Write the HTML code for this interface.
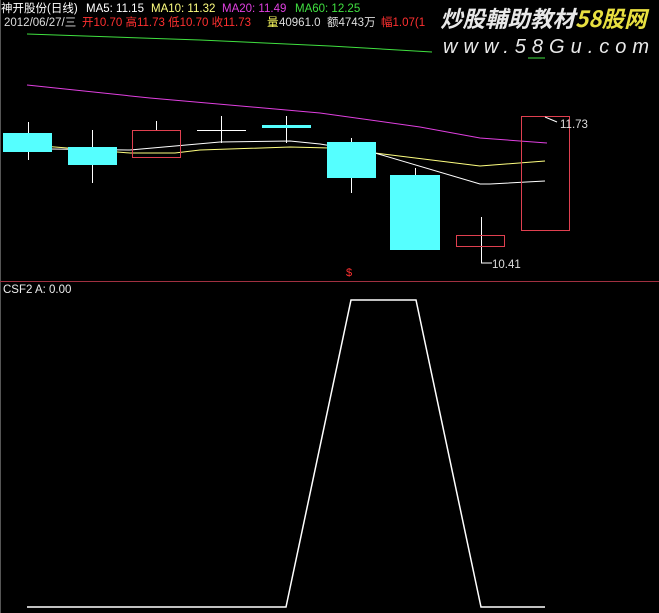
<!DOCTYPE html>
<html><head><meta charset="utf-8"><style>
html,body{margin:0;padding:0;background:#000;width:659px;height:613px;overflow:hidden}
svg{display:block}
text{font-family:"Liberation Sans","Noto Sans CJK SC",sans-serif;font-size:11.5px}
</style></head><body>
<svg width="659" height="613" viewBox="0 0 659 613" xmlns="http://www.w3.org/2000/svg">
<rect width="659" height="613" fill="#000"/>
<line x1="0.5" y1="0" x2="0.5" y2="613" stroke="#555" stroke-width="1"/>
<text x="1" y="12" fill="#fff">神开股份(日线)</text>
<text x="86" y="12" fill="#fff">MA5: 11.15</text>
<text x="151" y="12" fill="#ffff80">MA10: 11.32</text>
<text x="222" y="12" fill="#e040e0">MA20: 11.49</text>
<text x="295" y="12" fill="#40e040">MA60: 12.25</text>
<text x="4" y="26" fill="#ddd">2012/06/27/三</text>
<text x="82" y="26" fill="#ff3030">开10.70 高11.73 低10.70 收11.73</text>
<text x="267" y="26" fill="#ffff60">量</text>
<text x="279" y="26" fill="#ddd">40961.0</text>
<text x="327" y="26" fill="#ddd">额4743万</text>
<text x="381" y="26" fill="#ff3030">幅1.07(1</text>
<text x="440" y="27" fill="#e8e8e8" style="font-size:22.5px;font-style:italic;font-weight:bold;font-family:'Noto Sans CJK SC',sans-serif">炒股輔助教材<tspan fill="#e8e040">58股网</tspan></text>
<text x="443" y="53" fill="#e8e8e8" style="font-size:20px;font-style:italic;letter-spacing:6px">www.58Gu.com</text>
<line x1="528" y1="58" x2="545" y2="58" stroke="#40e040"/>
<polyline points="27,34 200,40 330,46 432,52" fill="none" stroke="#40e040"/>
<polyline points="27,85 150,98 320,113 420,127 480,138 547,143" fill="none" stroke="#e040e0"/>
<polyline points="30,145 130,153 175,153 200,150 290,147 330,148 375,153 480,166 545,161" fill="none" stroke="#ffff80"/>
<polyline points="50,149 130,150 220,142 290,141 320,144 375,153 480,184 490,184 545,181" fill="none" stroke="#fff"/>
<g stroke="#fff">
<line x1="28.5" y1="122" x2="28.5" y2="160"/>
<line x1="92.5" y1="130" x2="92.5" y2="183"/>
<line x1="156.5" y1="121" x2="156.5" y2="130"/>
<line x1="221.5" y1="116" x2="221.5" y2="143"/>
<line x1="197" y1="130.5" x2="246" y2="130.5"/>
<line x1="286.5" y1="116" x2="286.5" y2="143"/>
<line x1="351.5" y1="138" x2="351.5" y2="193"/>
<line x1="415.5" y1="168" x2="415.5" y2="176"/>
<line x1="481.5" y1="217" x2="481.5" y2="263"/>
</g>
<g fill="#55ffff">
<rect x="3" y="133" width="49" height="19"/>
<rect x="68" y="147" width="49" height="18"/>
<rect x="262" y="125" width="49" height="3"/>
<rect x="327" y="142" width="49" height="36"/>
<rect x="390" y="175" width="50" height="75"/>
</g>
<g fill="none" stroke="#e04050">
<rect x="132.5" y="130.5" width="48" height="27"/>
<rect x="456.5" y="235.5" width="48" height="11"/>
<rect x="521.5" y="116.5" width="48" height="114"/>
</g>
<line x1="545" y1="117" x2="557" y2="122" stroke="#fff"/>
<text x="560" y="128" fill="#ddd">11.73</text>
<line x1="481" y1="263" x2="492" y2="263" stroke="#fff"/>
<text x="492" y="268" fill="#ddd">10.41</text>
<text x="346" y="276" fill="#ff3030" style="font-size:11px">$</text>
<line x1="0" y1="281.5" x2="659" y2="281.5" stroke="#a03040"/>
<text x="3" y="293" fill="#eee">CSF2  A: 0.00</text>
<polyline points="27,607 286,607 351,300 416,300 481,607 545,607" fill="none" stroke="#fff" stroke-width="1.5"/>
</svg>
</body></html>
